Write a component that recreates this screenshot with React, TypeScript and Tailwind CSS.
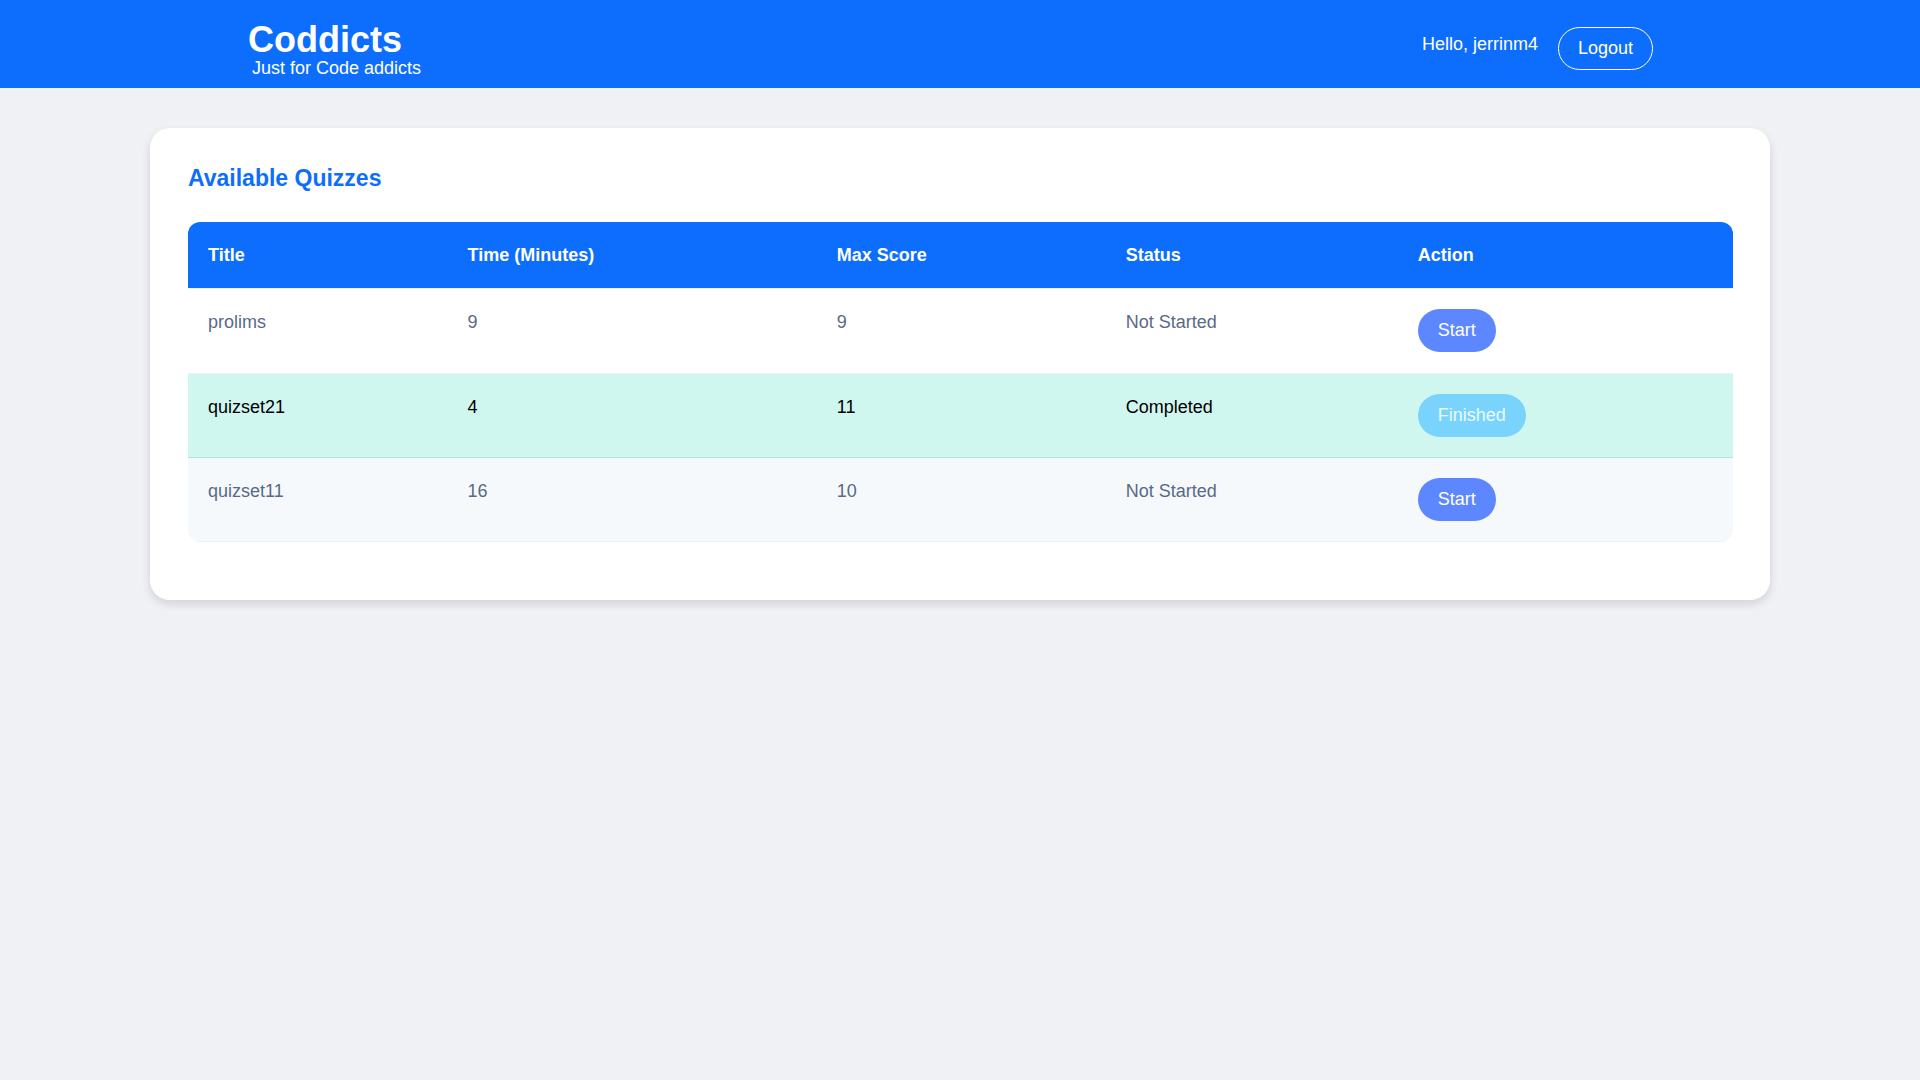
type Quiz = { title: string; minutes: number; maxScore: number; completed: boolean; rowClass: string };

const quizzes: Quiz[] = [
  { title: 'prolims', minutes: 9, maxScore: 9, completed: false, rowClass: 'h-[85px] text-[#5a6a85] border-[#ebf1f6]' },
  { title: 'quizset21', minutes: 4, maxScore: 11, completed: true, rowClass: 'bg-[#d0f7ef] text-black border-[#bbded7]' },
  { title: 'quizset11', minutes: 16, maxScore: 10, completed: false, rowClass: 'bg-[#f5f9fc] text-[#5a6a85] border-[#ebf1f6]' },
];

function Header() {
  return (
    <header className="bg-[#0d6efd] text-white">
      <div className="mx-auto flex h-[88px] w-full max-w-[1424px] items-start justify-between">
        <div className="pt-[21px]">
          <h1 className="text-[36px] leading-[38px] font-bold">Coddicts</h1>
          <p className="pl-1 leading-[18px]">Just for Code addicts</p>
        </div>
        <div className="flex items-start gap-5 pt-[27px] pr-[19px]">
          <span className="leading-[34px]">Hello, jerrinm4</span>
          <button type="button" className="h-[43px] rounded-full border border-white px-[19px]">
            Logout
          </button>
        </div>
      </div>
    </header>
  );
}

function ActionButton({ completed }: { completed: boolean }) {
  return completed ? (
    <button type="button" disabled className="block h-[43px] rounded-full bg-[#7ad3fd] px-5 text-[#e9fbff]">
      Finished
    </button>
  ) : (
    <button type="button" className="block h-[43px] rounded-full bg-[#5d87ff] px-5 text-white">
      Start
    </button>
  );
}

function QuizTable() {
  return (
    <div className="overflow-hidden rounded-xl">
      <table className="w-full table-fixed border-separate border-spacing-0 text-left">
        <colgroup>
          <col className="w-[16.8%]" />
          <col className="w-[23.9%]" />
          <col className="w-[18.7%]" />
          <col className="w-[18.9%]" />
          <col />
        </colgroup>
        <thead>
          <tr className="text-white">
            {['Title', 'Time (Minutes)', 'Max Score', 'Status', 'Action'].map((label) => (
              <th key={label} scope="col" className="h-[67px] border-b border-[#ebf1f6] bg-[#0d6efd] px-5 font-bold">
                {label}
              </th>
            ))}
          </tr>
        </thead>
        <tbody>
          {quizzes.map((quiz) => (
            <tr key={quiz.title} className={`align-top [&>td]:border-b [&>td]:border-inherit [&>td]:px-5 [&>td]:py-5 ${quiz.rowClass}`}>
              <td>{quiz.title}</td>
              <td>{quiz.minutes}</td>
              <td>{quiz.maxScore}</td>
              <td>{quiz.completed ? 'Completed' : 'Not Started'}</td>
              <td>
                <ActionButton completed={quiz.completed} />
              </td>
            </tr>
          ))}
        </tbody>
      </table>
    </div>
  );
}

export default function App() {
  return (
    <div className="min-h-screen bg-[#f0f1f5] font-['Liberation_Sans',Arial,sans-serif] text-[18px] leading-[27px]">
      <Header />
      <main className="px-5 pt-10">
        <section className="mx-auto max-w-[1620px] rounded-[20px] bg-white pr-[37px] pl-[38px] pt-[37px] pb-[58px] shadow-[0_4px_10px_rgba(0,0,0,0.13)]">
          <h2 className="mb-[31px] text-[23px] leading-[26px] font-bold text-[#0d6efd]">Available Quizzes</h2>
          <QuizTable />
        </section>
      </main>
    </div>
  );
}
